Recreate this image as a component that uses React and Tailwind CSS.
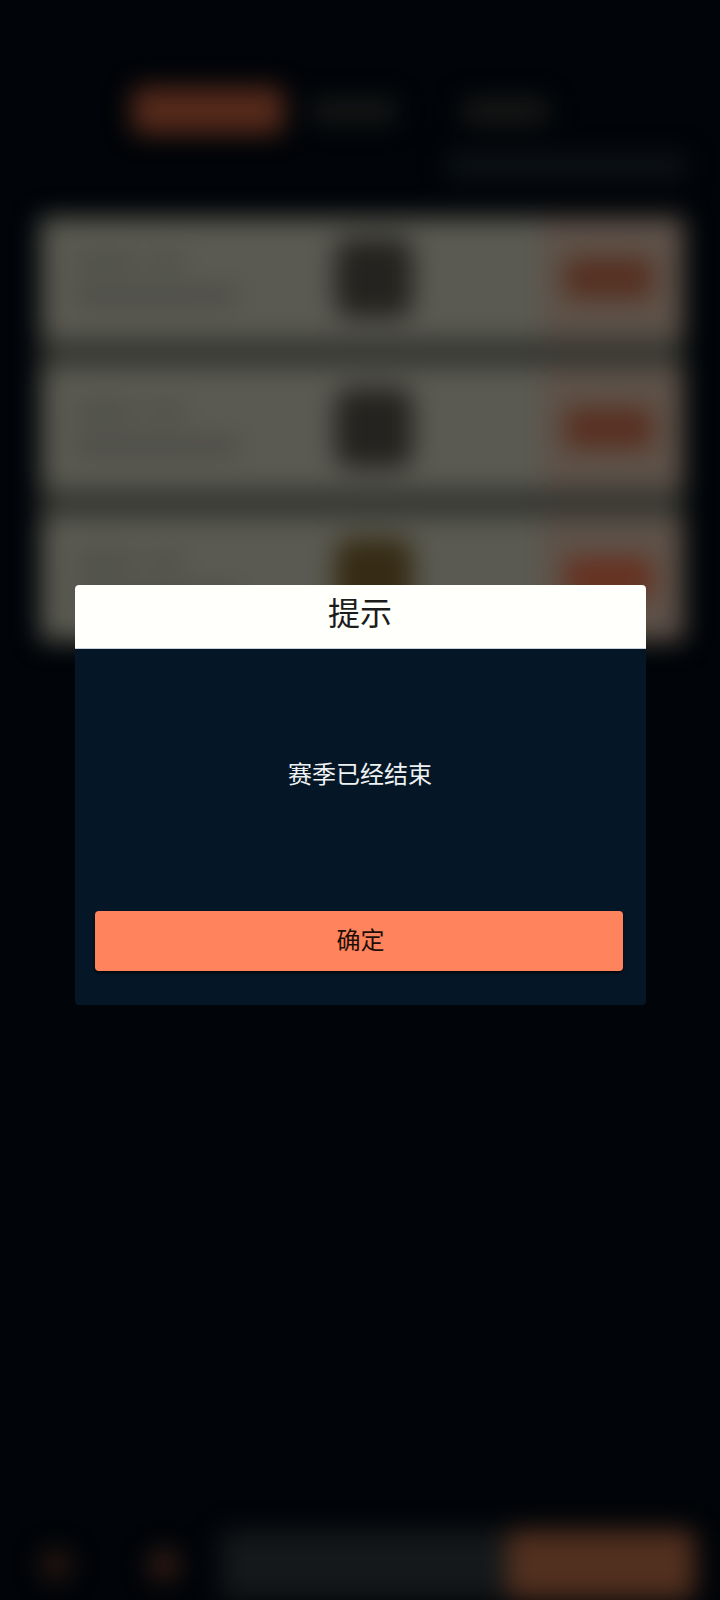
import React from 'react';

const cards = [
  { badge: 'bg-[#24231f]', orange: 'bg-[#552f20]' },
  { badge: 'bg-[#24231f]', orange: 'bg-[#582f20]' },
  { badge: 'bg-[#362b14]', orange: 'bg-[#66301f]' },
];

const SeasonCard = ({ badge, orange }) => (
  <div className="flex h-[122px] items-center bg-[#5a5a52]">
    <div className="flex w-[295px] flex-col gap-5 pl-[34px]">
      <div className="flex gap-3">
        <div className="h-4 w-16 bg-[#4c4d46]" />
        <div className="h-4 w-8 bg-[#4c4d46]" />
      </div>
      <div className="h-3 w-[165px] bg-[#454640]" />
    </div>
    <div className={`h-[80px] w-[78px] rounded-2xl ${badge}`} />
    <div className="ml-auto flex h-full w-[142px] items-center justify-center pr-2 bg-[#5e5249]">
      <div className={`h-10 w-[88px] rounded-lg ${orange}`} />
    </div>
  </div>
);

// fondo difuminado detrás del diálogo
const BlurredPage = () => (
  <div className="flex h-full flex-col blur-[13px]">
    <div className="mt-[87px] flex h-[47px] items-center pl-[132px]">
      <div className="h-full w-[152px] rounded-lg bg-[#562a1b]" />
      <div className="ml-7 h-6 w-[84px] bg-[#171817]" />
      <div className="ml-[66px] h-6 w-[86px] bg-[#191917]" />
    </div>
    <div className="mt-[20px] ml-[446px] h-[24px] w-[240px] bg-[#0e1316]" />
    <div className="ml-[40px] mr-[36px] mt-[39px] flex h-[425px] flex-col gap-[28px] bg-[#33352f]">
      {cards.map((c, i) => (
        <SeasonCard key={i} {...c} />
      ))}
    </div>
    <div className="mt-auto flex h-[70px] items-center pl-[40px]">
      <div className="h-8 w-8 rounded-full bg-[#2a1812]" />
      <div className="ml-[76px] h-8 w-8 rounded-full bg-[#361e17]" />
      <div className="ml-[40px] h-full w-[287px] bg-[#14181a]" />
      <div className="h-full w-[188px] rounded-lg bg-[#52301f]" />
    </div>
  </div>
);

export default function App() {
  return (
    <div className="relative h-[1600px] w-[720px] overflow-hidden bg-[#010408] font-['Noto_Sans_CJK_SC','Noto_Sans',sans-serif]">
      <BlurredPage />

      <div className="absolute inset-0 flex justify-center pt-[585px]">
        <div className="flex h-[420px] w-[571px] flex-col overflow-hidden rounded-[4px] bg-[#051726]">
          <div className="flex h-[64px] items-center justify-center border-b border-[#c9d2d6] bg-[#fffffb] pb-[12px] text-[32px] text-[#1c1c1c]">
            提示
          </div>
          <div className="flex h-[262px] items-center justify-center pb-[14px] text-2xl text-[#eef2f3]">
            赛季已经结束
          </div>
          <div className="pl-[20px]">
            <button className="flex h-[60px] w-[528px] items-center justify-center rounded-[4px] bg-[#ff835c] pb-[4px] pl-[4px] text-2xl text-[#1d0f08] shadow-[0_2px_3px_rgba(0,0,0,0.7)]">
              确定
            </button>
          </div>
        </div>
      </div>
    </div>
  );
}
